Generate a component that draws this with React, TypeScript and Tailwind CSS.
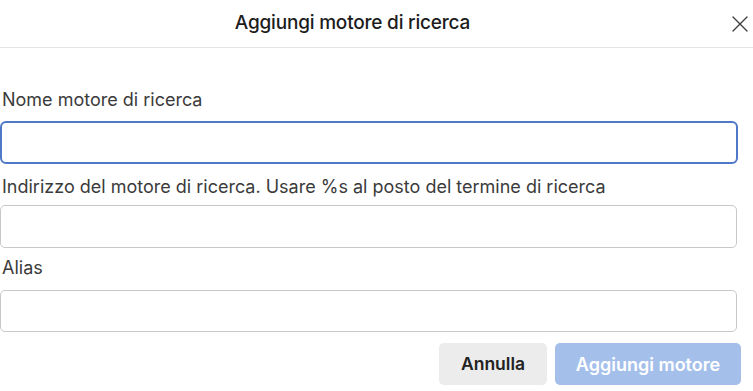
import React from "react";

export default function App() {
  return (
    <div
      className="w-[753px] h-[391px] bg-white overflow-hidden relative"
      style={{ fontFamily: "Inter, 'Liberation Sans', sans-serif" }}
    >
      <div className="h-[48px] border-b border-[#e3e3e3] flex items-center justify-center relative pr-[48px]">
        <span className="text-[19px] font-medium text-[#1c1c1c] tracking-[-0.2px]">
          Aggiungi motore di ricerca
        </span>
        <svg
          className="absolute left-[732px] top-[16px]"
          width="16"
          height="16"
          viewBox="0 0 16 16"
          fill="none"
          stroke="#3a3a3a"
          strokeWidth="1.3"
          strokeLinecap="round"
        >
          <path d="M1 1 L15 15 M15 1 L1 15" />
        </svg>
      </div>

      <div className="w-[741px] pt-[41px] flex flex-col">
        <label className="pl-[2px] h-[22px] leading-[22px] text-[18px] text-[#3b3b3b]">
          Nome motore di ricerca
        </label>
        <div className="mt-[10px] w-[738px] h-[43px] rounded-[6px] border-2 border-[#5078c8] bg-white" />
        <label className="mt-[12px] pl-[2px] h-[22px] leading-[22px] text-[18px] text-[#3b3b3b]">
          Indirizzo del motore di ricerca. Usare %s al posto del termine di ricerca
        </label>
        <div className="mt-[7px] w-[737px] h-[43px] rounded-[5px] border border-[#c8c8c8] bg-white" />
        <label className="mt-[9px] pl-[2px] h-[22px] leading-[22px] text-[18px] text-[#3b3b3b]">
          Alias
        </label>
        <div className="mt-[11px] w-[737px] h-[42px] rounded-[5px] border border-[#c8c8c8] bg-white" />
        <div className="mt-[11px] flex justify-end gap-[8px]">
          <button className="w-[108px] h-[42px] rounded-[5px] bg-[#ececec] text-[17.5px] font-semibold text-[#222]">
            Annulla
          </button>
          <button className="w-[186px] h-[42px] rounded-[5px] bg-[#a5bfeb] text-[18px] font-semibold text-white">
            Aggiungi motore
          </button>
        </div>
      </div>
    </div>
  );
}
